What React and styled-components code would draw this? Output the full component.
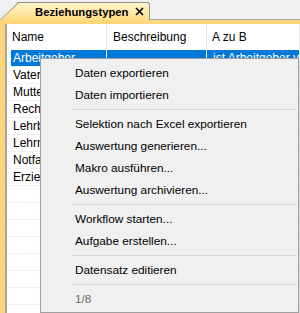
import React from "react";
import styled, { createGlobalStyle } from "styled-components";

const Global = createGlobalStyle`
  html, body { margin: 0; padding: 0; background: #fff; }
  body { font-family: "Liberation Sans", Arial, sans-serif; font-size: 12px; color: #000; }
`;

const Window = styled.div`
  position: relative;
  width: 300px;
  height: 313px;
  overflow: hidden;
  display: flex;
  flex-direction: column;
  background: #f0f0f0;
`;

const TabStrip = styled.div`
  flex: none;
  height: 20px;
  display: flex;
  align-items: flex-end;
  background: #f0f0f0;
  box-shadow: inset 0 -1px 0 #a9a9a9;
`;

const Tab = styled.div`
  position: relative;
  box-sizing: border-box;
  width: 150px;
  height: 18px;
  display: flex;
  align-items: center;
  justify-content: space-between;
  padding: 0 5px 0 35px;
  background: linear-gradient(#fff5cc, #ffdc86);
  border-top: 1px solid #8f8f8f;
  border-right: 1px solid #8f8f8f;
  border-top-right-radius: 3px;
  clip-path: polygon(18px 0, 100% 0, 100% 100%, 0 100%);
  &::before {
    content: "";
    position: absolute;
    left: 0;
    top: -1px;
    width: 19px;
    height: 18px;
    background: linear-gradient(
      to bottom right,
      transparent calc(50% - 1px),
      #8a8a8a 50%,
      transparent calc(50% + 1px)
    );
  }
`;

const TabLabel = styled.span`
  font-weight: bold;
  font-size: 11.3px;
  line-height: 16px;
`;

const Frame = styled.div`
  flex: 1;
  min-height: 0;
  display: flex;
  border-top: 4px solid #ffd77a;
  border-left: 5px solid #ffd77a;
  background: #fff;
`;

const List = styled.div`
  flex: 1;
  min-width: 0;
  display: flex;
  flex-direction: column;
  overflow: hidden;
  border-left: 2px solid #a3a3a3;
  background: #fff;
`;

const HeaderRow = styled.div`
  flex: none;
  display: grid;
  grid-template-columns: 100px 100px 1fr;
  height: 26px;
`;

const HeaderCell = styled.div`
  display: flex;
  align-items: center;
  padding-left: ${(p) => p.$pad || 5}px;
  border-right: 1px solid #e5e5e5;
  white-space: nowrap;
  overflow: hidden;
`;

const Row = styled.div`
  flex: none;
  display: grid;
  grid-template-columns: 4px 96px 100px 1fr;
  height: 16px;
  border-bottom: 1px solid #efefef;
`;

const Gutter = styled.div``;

const Cell = styled.div`
  display: flex;
  align-items: center;
  padding-left: ${(p) => p.$pad}px;
  white-space: nowrap;
  overflow: hidden;
  background: ${(p) => (p.$selected ? "#0078d7" : "transparent")};
  color: ${(p) => (p.$selected ? "#fff" : "#000")};
  border-right: 1px solid ${(p) => (p.$selected ? "#fff" : "#f3f3f3")};
`;

const Menu = styled.div`
  position: absolute;
  left: 40px;
  top: 58px;
  width: 259px;
  box-sizing: border-box;
  padding: 3px 2px 2px;
  background: #f0f0f0;
  border: 1px solid #a0a0a0;
  box-shadow: 1px 1px 2px rgba(0, 0, 0, 0.15);
  display: flex;
  flex-direction: column;
  font-size: 11.8px;
`;

const MenuItem = styled.div`
  height: 22px;
  display: flex;
  align-items: center;
  padding-left: 32px;
  white-space: nowrap;
  color: ${(p) => (p.$disabled ? "#6d6d6d" : "#000")};
`;

const Separator = styled.div`
  height: 1px;
  margin: 3px 0 3px 28px;
  background: #d7d7d7;
`;

const CloseIcon = () => (
  <svg width="9" height="9" viewBox="0 0 9 9">
    <path d="M1 1 L8 8 M8 1 L1 8" stroke="#000" strokeWidth="1.6" fill="none" />
  </svg>
);

const rows = [
  { name: "Arbeitgeber", desc: "", ab: "ist Arbeitgeber von", selected: true },
  { name: "Vater", desc: "", ab: "ist Vater von" },
  { name: "Mutter", desc: "", ab: "ist Mutter von" },
  { name: "Rechnungsempfänger", desc: "", ab: "ist Rechnungsempfänger von" },
  { name: "Lehrbetrieb", desc: "", ab: "ist Lehrbetrieb von" },
  { name: "Lehrmeister", desc: "", ab: "ist Lehrmeister von" },
  { name: "Notfallkontakt", desc: "", ab: "ist Notfallkontakt von" },
  { name: "Erziehungsberechtigter", desc: "", ab: "ist Erziehungsberechtigter von" },
];

const empty = Array.from({ length: 8 }, () => ({ name: "", desc: "", ab: "" }));

const menu = [
  { label: "Daten exportieren" },
  { label: "Daten importieren" },
  { sep: true },
  { label: "Selektion nach Excel exportieren" },
  { label: "Auswertung generieren..." },
  { label: "Makro ausführen..." },
  { label: "Auswertung archivieren..." },
  { sep: true },
  { label: "Workflow starten..." },
  { label: "Aufgabe erstellen..." },
  { sep: true },
  { label: "Datensatz editieren" },
  { sep: true },
  { label: "1/8", disabled: true },
];

export default function App() {
  return (
    <>
      <Global />
      <Window>
        <TabStrip>
          <Tab>
            <TabLabel>Beziehungstypen</TabLabel>
            <CloseIcon />
          </Tab>
        </TabStrip>
        <Frame>
          <List>
            <HeaderRow>
              <HeaderCell>Name</HeaderCell>
              <HeaderCell $pad={6}>Beschreibung</HeaderCell>
              <HeaderCell>A zu B</HeaderCell>
            </HeaderRow>
            {[...rows, ...empty].map((r, i) => (
              <Row key={i}>
                <Gutter />
                <Cell $pad={2} $selected={r.selected}>{r.name}</Cell>
                <Cell $pad={5} $selected={r.selected}>{r.desc}</Cell>
                <Cell $pad={6} $selected={r.selected}>{r.ab}</Cell>
              </Row>
            ))}
          </List>
        </Frame>
        <Menu>
          {menu.map((m, i) =>
            m.sep ? (
              <Separator key={i} />
            ) : (
              <MenuItem key={i} $disabled={m.disabled}>
                {m.label}
              </MenuItem>
            )
          )}
        </Menu>
      </Window>
    </>
  );
}
